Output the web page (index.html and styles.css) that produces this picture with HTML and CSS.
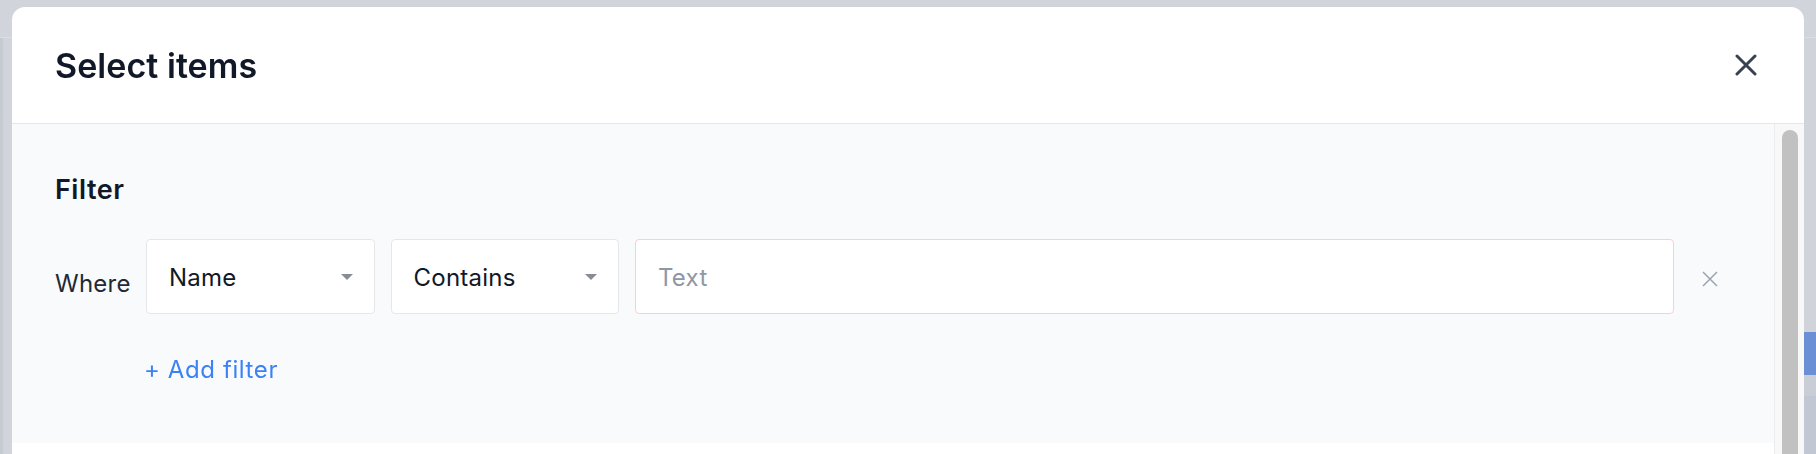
FILE: index.html
```html
<!DOCTYPE html>
<html lang="en">
<head>
<meta charset="utf-8">
<title>Select items</title>
<link rel="stylesheet" href="styles.css">
</head>
<body>
<div class="app">
  <div class="app-bar"></div>
  <div class="app-body">
    <div class="app-main"></div>
    <div class="app-side">
      <div class="side-gap"></div>
      <div class="side-active"></div>
      <div class="side-row"></div>
      <div class="side-rest"></div>
    </div>
  </div>
</div>

<div class="modal" role="dialog" aria-labelledby="modal-title">
  <header class="modal-header">
    <h2 class="modal-title" id="modal-title">Select items</h2>
    <button class="close-btn" aria-label="Close">
      <svg width="22" height="22" viewBox="0 0 22 22" fill="none" stroke="currentColor" stroke-width="3" stroke-linecap="round">
        <path d="M2 2 L20 20 M20 2 L2 20"/>
      </svg>
    </button>
  </header>
  <div class="modal-body">
    <div class="modal-content">
      <section class="filter-section">
        <h3 class="filter-title">Filter</h3>
        <div class="filter-row">
          <span class="where">Where</span>
          <div class="select"><span class="select-value">Name</span><span class="caret"></span></div>
          <div class="select"><span class="select-value">Contains</span><span class="caret"></span></div>
          <div class="text-input"><span class="placeholder">Text</span></div>
          <button class="remove-btn" aria-label="Remove filter">
            <svg width="16" height="16" viewBox="0 0 16 16" fill="none" stroke="currentColor" stroke-width="1.5">
              <path d="M1 1 L15 15 M15 1 L1 15"/>
            </svg>
          </button>
        </div>
        <a class="add-filter">+ Add filter</a>
      </section>
      <div class="modal-rest"></div>
    </div>
    <div class="scrollbar"><div class="thumb"></div></div>
  </div>
</div>
</body>
</html>
```

FILE: styles.css
```css
* { box-sizing: border-box; }

html, body {
  margin: 0;
  height: 100%;
  overflow: hidden;
}

body {
  background: #cfd3d9;
  font-family: Inter, "Noto Sans", sans-serif;
}

/* background app (dimmed) */
.app {
  height: 100%;
  display: flex;
  flex-direction: column;
}
.app-bar {
  height: 38px;
  border-bottom: 1px solid #dadde2;
  background: #d1d5db;
}
.app-body {
  flex: 1;
  display: flex;
}
.app-main {
  flex: 1;
  background: #d1d5db;
  border-left: 3px solid #c6cad1;
}
.app-side {
  width: 12px;
  display: flex;
  flex-direction: column;
}
.side-gap { height: 294px; background: #d0d3da; }
.side-active { height: 43px; background: #6a8fd5; }
.side-row { height: 21px; background: #c9cdd6; }
.side-rest { flex: 1; background: #c1c7d3; }

/* modal */
.modal {
  position: fixed;
  left: 12px;
  top: 7px;
  width: 1792px;
  height: 640px;
  background: #ffffff;
  border-radius: 13px 13px 0 0;
  display: flex;
  flex-direction: column;
  overflow: hidden;
}

.modal-header {
  height: 117px;
  flex: none;
  border-bottom: 1px solid #e5e7eb;
  display: flex;
  align-items: center;
  justify-content: space-between;
  padding: 0 47px 0 43px;
}

.modal-title {
  margin: 0;
  font-size: 34px;
  font-weight: 600;
  color: #111827;
  letter-spacing: 0.05px;
}

.close-btn {
  border: 0;
  background: none;
  padding: 0;
  width: 22px;
  height: 22px;
  color: #374151;
  display: flex;
}

.modal-body {
  flex: 1;
  display: flex;
}

.modal-content {
  flex: 1;
  display: flex;
  flex-direction: column;
}

.filter-section {
  background: #f9fafb;
  padding: 50px 44px 54.5px 43px;
  display: flex;
  flex-direction: column;
}

.filter-title {
  margin: 0 0 33px 0;
  font-size: 27px;
  line-height: 32px;
  font-weight: 600;
  letter-spacing: 0.5px;
  color: #111827;
}

.filter-row {
  display: flex;
  align-items: flex-start;
  gap: 16px;
}

.where {
  flex: 0 0 75px;
  min-width: 0;
  margin-top: 27px;
  font-size: 24px;
  line-height: 1.5;
  letter-spacing: 0.25px;
  color: #1f2937;
  white-space: nowrap;
}

.select {
  flex: 0 0 228.5px;
  height: 75px;
  background: #ffffff;
  border: 1px solid #e5e7eb;
  border-radius: 4px;
  padding: 3px 21px 0 22px;
  display: flex;
  align-items: center;
  justify-content: space-between;
}

.select-value {
  font-size: 24px;
  line-height: 1.5;
  letter-spacing: 0.25px;
  color: #111827;
}

.caret {
  width: 0;
  height: 0;
  border-left: 6px solid transparent;
  border-right: 6px solid transparent;
  border-top: 6px solid #878c96;
  margin-top: -3px;
}

.text-input {
  flex: 1;
  height: 75px;
  background: #ffffff;
  border: 1px solid #fbcfd0;
  border-radius: 4px;
  padding: 3px 0 0 22px;
  display: flex;
  align-items: center;
}

.placeholder {
  font-size: 24px;
  line-height: 1.5;
  letter-spacing: 0.25px;
  color: #8f97a4;
}

.remove-btn {
  flex: 0 0 40px;
  height: 75px;
  border: 0;
  padding: 0;
  background: none;
  color: #9ca3af;
  display: flex;
  align-items: center;
  justify-content: center;
  margin-top: 2px;
}

.add-filter {
  align-self: flex-start;
  margin: 36px 0 0 89px;
  font-size: 24px;
  line-height: 1.5;
  letter-spacing: 0.6px;
  color: #3b82f6;
  cursor: pointer;
}

.modal-rest {
  flex: 1;
  background: #ffffff;
}

.scrollbar {
  width: 30px;
  flex: none;
  border-left: 1px solid #ececec;
  background: #f8f8f8;
  padding: 6px 6px 0 7px;
}

.thumb {
  height: 600px;
  background: #c1c1c1;
  border-radius: 8px;
}
```
